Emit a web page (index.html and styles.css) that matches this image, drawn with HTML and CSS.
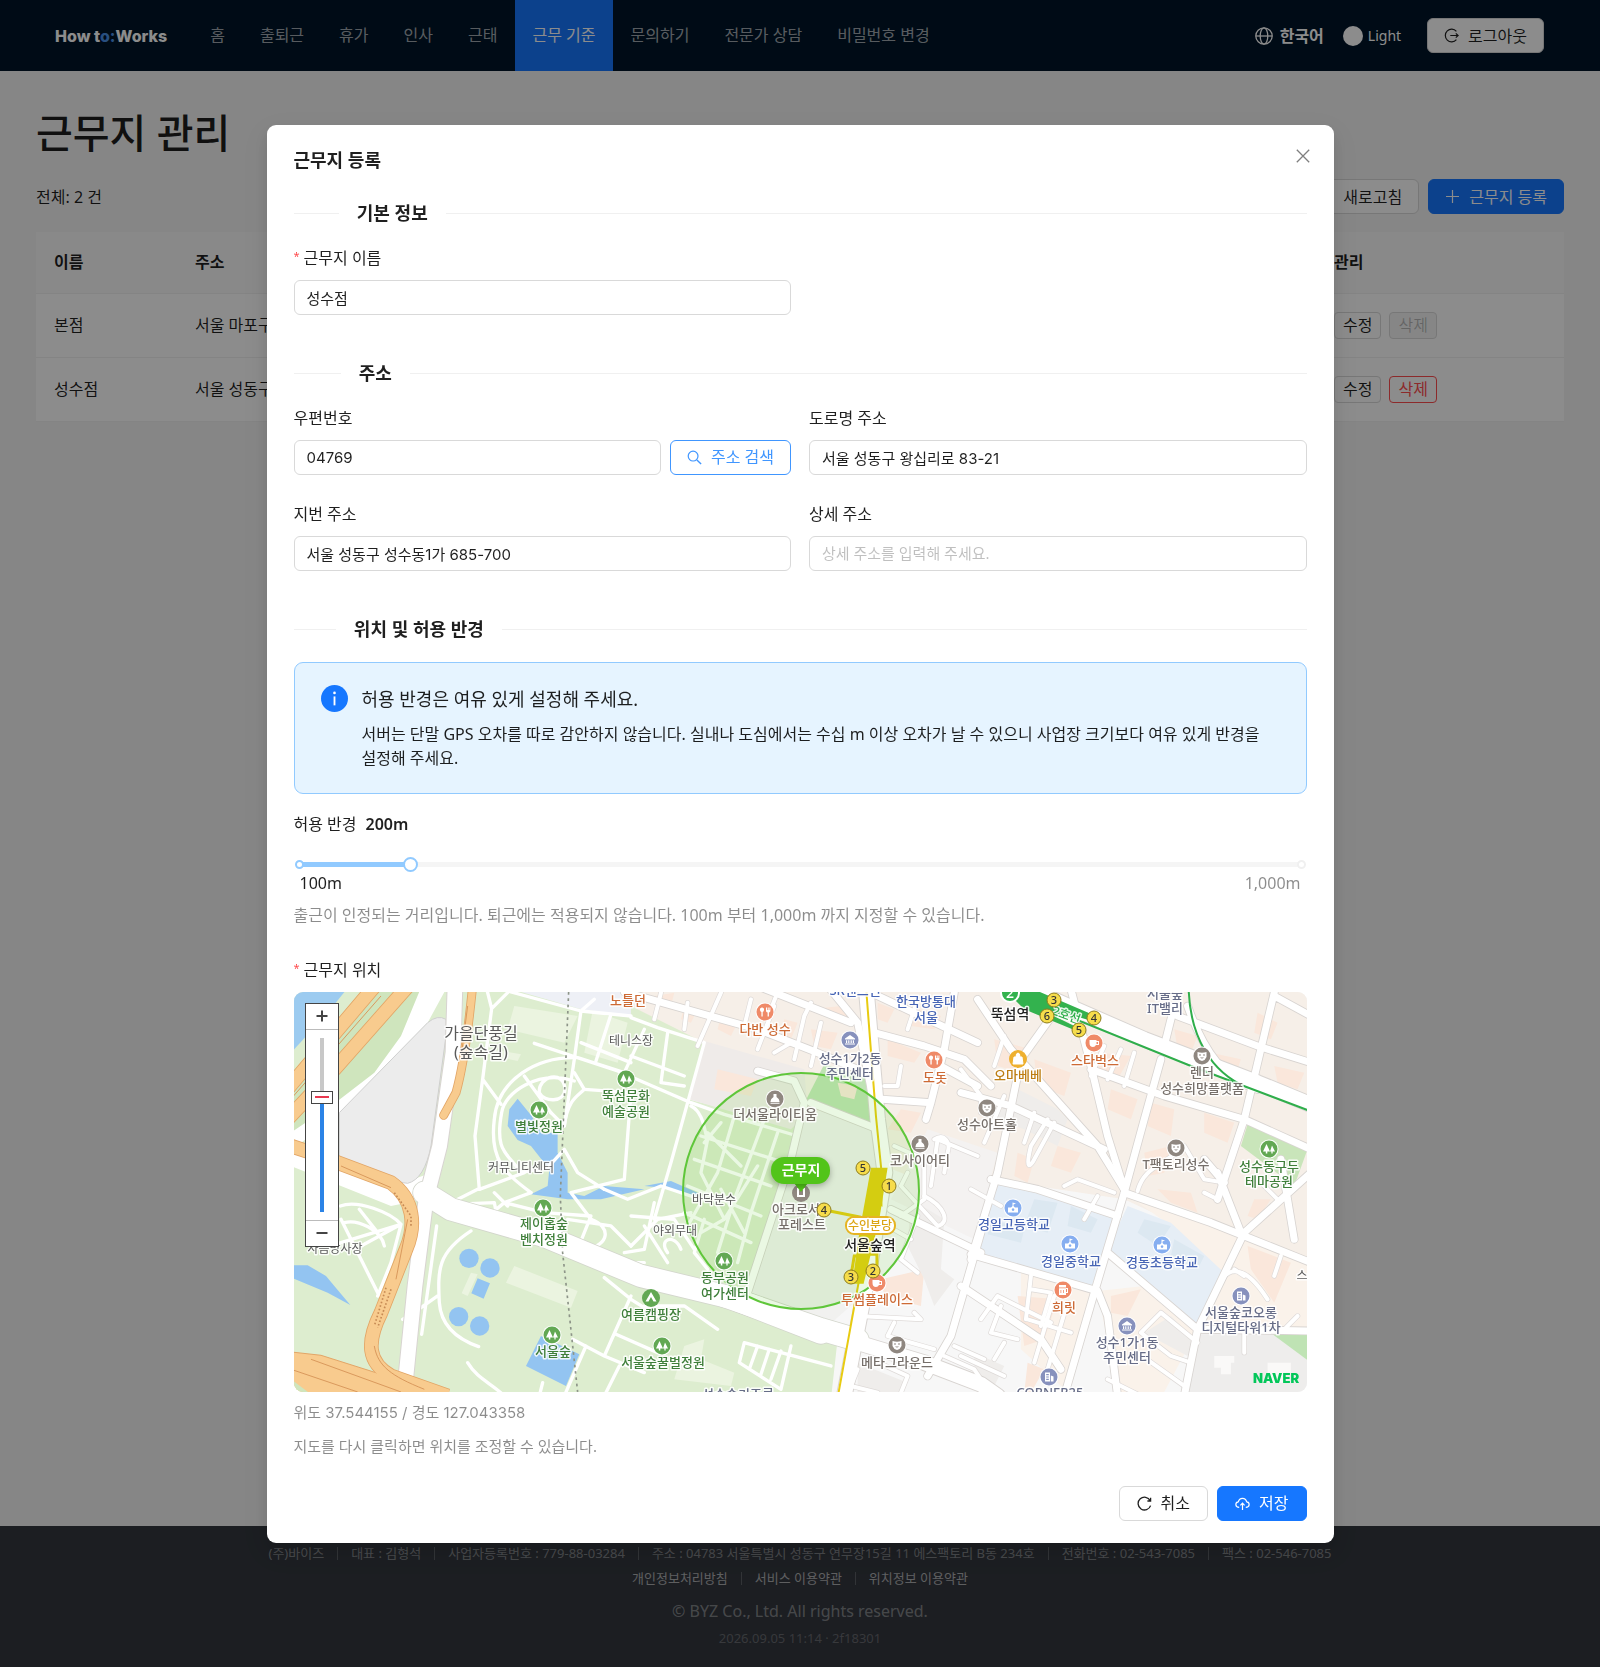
FILE: index.html
```html
<!DOCTYPE html>
<html lang="ko">
<head>
<meta charset="utf-8">
<meta name="viewport" content="width=device-width, initial-scale=1">
<title>근무지 관리</title>
<link rel="stylesheet" href="styles.css">
</head>
<body>
<div class="page">
  <header class="topbar">
    <a class="logo" href="#">How t<span class="logo-accent">o:</span>Works</a>
    <nav class="nav">
      <a href="#">홈</a><a href="#">출퇴근</a><a href="#">휴가</a><a href="#">인사</a><a href="#">근태</a><a class="active" href="#">근무 기준</a><a href="#">문의하기</a><a href="#">전문가 상담</a><a href="#">비밀번호 변경</a>
    </nav>
    <div class="tools">
      <button class="lang" type="button">
        <svg class="globe" viewBox="0 0 18 18" aria-hidden="true"><g fill="none" stroke="currentColor" stroke-width="1.3"><circle cx="9" cy="9" r="8.2"/><ellipse cx="9" cy="9" rx="3.8" ry="8.2"/><path d="M.8 9h16.4"/></g></svg>
        한국어
      </button>
      <button class="theme" type="button"><span class="theme-dot"></span>Light</button>
      <button class="btn" type="button">
        <svg class="ico" viewBox="0 0 15 15" aria-hidden="true"><path d="M12.4 3.4A6.3 6.3 0 1 0 12.4 11.6M6.3 7.5h7.6M11.8 5.4l2.3 2.1-2.3 2.1" fill="none" stroke="currentColor" stroke-width="1.2"/></svg>
        로그아웃
      </button>
    </div>
  </header>

  <main class="content">
    <h1>근무지 관리</h1>
    <div class="listbar">
      <span>전체: 2 건</span>
      <div class="actions">
        <button class="btn" type="button">
          <svg class="ico" viewBox="0 0 15 15" aria-hidden="true"><path d="M13.2 4.6A6.4 6.4 0 1 0 13.6 9.6M13.6 1.8v3.2h-3.2" fill="none" stroke="currentColor" stroke-width="1.3"/></svg>
          새로고침
        </button>
        <button class="btn primary" type="button">
          <svg class="ico" viewBox="0 0 15 15" aria-hidden="true"><path d="M7.5 1v13M1 7.5h13" fill="none" stroke="currentColor" stroke-width="1.2"/></svg>
          근무지 등록
        </button>
      </div>
    </div>
    <table class="sites">
      <thead><tr><th class="col-name">이름</th><th>주소</th><th class="col-act">관리</th></tr></thead>
      <tbody>
        <tr><td>본점</td><td>서울 마포구</td><td><div class="row-actions"><button class="btn small" type="button">수정</button><button class="btn small" type="button" disabled>삭제</button></div></td></tr>
        <tr><td>성수점</td><td>서울 성동구</td><td><div class="row-actions"><button class="btn small" type="button">수정</button><button class="btn small danger" type="button">삭제</button></div></td></tr>
      </tbody>
    </table>
  </main>

  <footer class="footer">
    <ul class="facts"><li>(주)바이즈</li><li>대표 : 김형석</li><li>사업자등록번호 : 779-88-03284</li><li>주소 : 04783 서울특별시 성동구 연무장15길 11 에스팩토리 B동 234호</li><li>전화번호 : 02-543-7085</li><li>팩스 : 02-546-7085</li></ul>
    <ul class="facts links"><li><a href="#">개인정보처리방침</a></li><li><a href="#">서비스 이용약관</a></li><li><a href="#">위치정보 이용약관</a></li></ul>
    <p class="copy">© BYZ Co., Ltd. All rights reserved.</p>
    <p class="build">2026.09.05 11:14 · 2f18301</p>
  </footer>
</div>

<div class="mask">
<form class="modal" role="dialog" aria-labelledby="modal-title">
  <div class="modal-head">
    <h2 id="modal-title">근무지 등록</h2>
    <button class="close" type="button" aria-label="닫기"><svg viewBox="0 0 14 14" aria-hidden="true"><path d="M.8.8l12.4 12.4M13.2.8L.8 13.2" fill="none" stroke="currentColor" stroke-width="1.3"/></svg></button>
  </div>

  <h3 class="divider"><span>기본 정보</span></h3>
  <div class="fields">
    <div class="field"><label class="required" for="f-name">근무지 이름</label><input class="text" id="f-name" type="text" value="성수점"></div>
  </div>

  <h3 class="divider spaced"><span>주소</span></h3>
  <div class="fields">
    <div class="field"><label for="f-zip">우편번호</label>
      <div class="with-button"><input class="text" id="f-zip" type="text" value="04769">
        <button class="btn outline" type="button"><svg class="ico" viewBox="0 0 15 15" aria-hidden="true"><path d="M9.9 9.9l4.2 4.2" fill="none" stroke="currentColor" stroke-width="1.4"/><circle cx="6.1" cy="6.1" r="4.9" fill="none" stroke="currentColor" stroke-width="1.2"/></svg>주소 검색</button></div>
    </div>
    <div class="field"><label for="f-road">도로명 주소</label><input class="text" id="f-road" type="text" value="서울 성동구 왕십리로 83-21"></div>
    <div class="field"><label for="f-lot">지번 주소</label><input class="text" id="f-lot" type="text" value="서울 성동구 성수동1가 685-700"></div>
    <div class="field"><label for="f-detail">상세 주소</label><input class="text" id="f-detail" type="text" placeholder="상세 주소를 입력해 주세요."></div>
  </div>

  <h3 class="divider spaced"><span>위치 및 허용 반경</span></h3>
  <div class="alert">
    <svg class="alert-ico" viewBox="0 0 26 26" aria-hidden="true"><circle cx="13" cy="13" r="13" fill="#1677ff"/><circle cx="13" cy="7.6" r="1.3" fill="#fff"/><path d="M13 11v8.6" stroke="#fff" stroke-width="1.8"/></svg>
    <div>
      <p class="alert-title">허용 반경은 여유 있게 설정해 주세요.</p>
      <p>서버는 단말 GPS 오차를 따로 감안하지 않습니다. 실내나 도심에서는 수십 m 이상 오차가 날 수 있으니 사업장 크기보다 여유 있게 반경을 설정해 주세요.</p>
    </div>
  </div>

  <label class="radius-label" for="f-radius">허용 반경 <b>200m</b></label>
  <div class="slider">
    <span class="dot on"></span><span class="dot end"></span>
    <input id="f-radius" type="range" min="100" max="1000" value="200">
  </div>
  <div class="marks"><span>100m</span><span class="muted">1,000m</span></div>
  <p class="help">출근이 인정되는 거리입니다. 퇴근에는 적용되지 않습니다. 100m 부터 1,000m 까지 지정할 수 있습니다.</p>

  <p class="map-label required">근무지 위치</p>
  <div class="map">
    <svg class="map-art" viewBox="0 0 1013 400" preserveAspectRatio="xMidYMid slice" role="img" aria-label="근무지 지도">
      <defs>
        <g id="road-l" fill="none" stroke-linecap="round" stroke-linejoin="round">
          <path d="M400 620L480 670L760 750L1050 870L1320 935L1590 1040"/>
          <path d="M1300 930L1590 1030L1700 1062"/>
        </g>
        <g id="road-m" fill="none" stroke-linecap="round" stroke-linejoin="round">
          <path d="M492 0L486 200L446 480L405 640L372 900L345 1170"/>
          <path d="M2240 20L2560 160L2900 290L3070 360"/>
          <path d="M1600 1035L1700 1070L1900 1130L2070 1195L2120 1230"/>
          <path d="M1725 0L1760 400L1782 560L1740 820L1660 1230"/>
        </g>
        <g id="road-s" fill="none" stroke-linecap="round" stroke-linejoin="round">
          <path d="M2060 40L2160 190L2420 480L2500 610M2010 320L2160 360L2440 490M2290 80L2190 220L2120 560L2040 820"/>
          <path d="M2340 10L2400 240L2450 450L2500 610M2400 250L2620 330L2860 400L3060 490M2610 220L2560 400L2500 620L2410 920L2320 1230"/>
          <path d="M2660 90L2900 180L3060 230M2650 60L2620 180M2950 20L2860 400L2780 640M2950 30L3060 90M2690 60C2740 200 2800 280 2900 310"/>
          <path d="M2100 580L2240 610L2480 690M2500 620L2760 710L3060 830M2860 740L2720 1030L2680 1230M2450 800L2720 1030M2040 805L2420 915L2450 990L2480 1230"/>
          <path d="M2720 1030L3060 1035M2860 740L2960 650L3060 560M2780 560L2850 740M2970 520L3010 760M2800 590L2740 520"/>
          <path d="M1800 670L2070 800M2070 740L1980 1050L1910 1170M2010 900L2250 1060L2310 1150"/>
          <path d="M1540 350L1500 520L1360 950M1540 350L1510 285L1400 255M1560 350L1750 425"/>
          <path d="M1000 18L1400 130L1580 200L1700 250M1400 0L1680 110M1610 0L1700 110L1755 380M1750 140L1900 180L2020 220L2100 300M1740 20L2060 170"/>
          <path d="M1775 340L1920 350L1905 400M1990 20L1960 190L1920 350M1930 230L2060 300"/>
        </g>
        <g id="road-xs" fill="none" stroke-linecap="round" stroke-linejoin="round">
          <path d="M1110 20L1090 100M1190 50L1180 130M1290 20L1220 180M1380 40L1360 120M1450 60L1400 190M1500 170L1450 200M1540 90L1510 220M1590 110L1560 240M1460 18L1440 70M1560 50L1540 90"/>
          <path d="M1780 300H1820L1830 240M1880 40L1850 130M1920 600L1940 460L2060 510M1930 460C1960 440 1980 470 1970 500L1960 560M2140 330L2080 470M1810 480L1900 520L1900 640L1830 690M2010 250L2070 330V380M2290 410L2230 520C2220 540 2200 560 2220 480L2270 400M2230 380L2200 470M2440 180L2400 270M2490 190L2450 280M2530 200L2500 300M2140 150L2110 240"/>
          <path d="M2540 615C2560 540 2620 540 2680 480L2740 580L2800 590M2320 600L2360 580L2470 620M2130 660L2040 610M2380 700L2420 630M2900 580L2960 640M2740 620L2780 640"/>
          <path d="M2070 1000L2120 930L2280 1010M2130 960L2100 1040L2180 1060M2220 870L2205 1000M2290 930L2230 1130M2330 950L2270 1150M2210 1000L2340 1040M2220 910L2280 920L2250 1020M2550 1040L2610 980L2720 1070M2550 1040L2640 1110L2700 1130M2860 1030V1100M2980 1030L3020 990M2970 810L2950 870M2830 850L2860 870M2540 1100L2680 1200M2450 1180L2550 1230M2770 930C2800 830 2860 830 2930 940"/>
          <path d="M1700 990L1890 1000L1870 980M1810 1010L1790 1050L1930 1090M1990 1080L2080 1120M1960 1110L2050 1150L2090 1210M1700 1150L1680 1200L1760 1220M1740 1120L1850 1170L1830 1220M2140 1070L2110 1120M2010 1110L2140 1170"/>
          <path d="M1850 560L1830 600L1940 720C1980 710 1960 660 1900 630M1880 690L1830 820L1880 860M1790 720L1860 760"/>
        </g>
        <g id="park-path" fill="none" stroke-linecap="round" stroke-linejoin="round">
          <path d="M585 0L602 68L575 280L552 450L565 610M602 68L650 20M575 280L630 355M690 560L770 545L820 490L860 560L940 610M660 18L870 75L1020 90M910 40L870 75L850 220L820 420L780 380"/>
          <path d="M1000 260L860 215C740 210 620 280 610 400C595 520 640 560 720 620M850 285C740 250 640 320 632 380C610 500 650 500 690 560M730 172L980 255L1200 350L1300 385L1520 450M745 320C740 270 820 250 822 310C820 350 760 350 745 320M780 380L700 270M850 260L880 310C860 330 830 340 820 420"/>
          <path d="M870 170L1020 230M960 85L915 225M1020 95L1100 125L1240 170L1140 530L1090 700M1060 130L1000 260M1130 140L1110 290L1180 300M1020 210L1180 270M560 610L480 650M565 610L700 560M880 310L1020 320L1000 580M1000 580L840 620L900 700M940 610L1010 640L1110 600L1230 640"/>
          <path d="M720 620L640 650L580 700M640 650L760 680L900 690L860 790M610 620L650 660M480 655L610 650L620 700M900 700C960 720 960 780 880 790M830 700L960 720L1020 780M860 800L980 830L1060 830"/>
          <path d="M540 735C440 800 440 850 445 950C450 1020 500 1060 563 1082M437 720L392 1045M440 930L390 965L335 1000M148 660C200 640 300 680 330 715L210 780M150 700L265 930M160 710C200 700 270 730 280 780M330 715L300 830L260 930M150 770L330 715M205 670L260 740"/>
          <path d="M530 1130C560 1180 600 1190 640 1230M755 1190L745 1230M940 875L1020 940L1100 990M1020 930L940 1110L845 1060M975 1045L1100 1100M940 1110L1060 1160M985 1140L940 1230M885 1080L820 1230M1060 960L1180 960L1280 1030"/>
          <path d="M1360 1070L1620 1140M1360 1070L1345 1130L1470 1210L1500 1080M1400 1080L1375 1150M1435 1090L1410 1165M1470 1095L1440 1180"/>
          <path d="M1200 360C1240 380 1240 440 1250 460L1230 560L1300 700M1230 450L1480 530M1210 520L1440 600M1190 600L1410 690M1180 680L1380 770M1330 390L1280 560L1190 720M1420 400L1330 640L1280 800M1460 440L1380 680L1340 830M1250 440L1350 540M1400 540L1300 700L1230 740M1290 610L1360 740M1240 470L1290 410"/>
          <path d="M1020 780L1100 700L1200 680M1060 720L1130 830M1020 690L1150 700L1210 790M1090 650L1060 790L1000 800M1130 800C1100 760 1150 740 1170 790M1240 700L1210 800L1250 850"/>
        </g>
        <g id="blobs">
          <path d="M1090 30L1150 20L1140 60L1100 60ZM1180 60L1220 70L1200 110L1170 100ZM1290 90L1340 110L1320 150L1280 130ZM1480 100L1520 110L1500 160L1470 150ZM1560 130L1640 140L1620 190L1570 180ZM1560 70L1650 60L1680 95L1600 90ZM1280 250L1400 280L1380 330L1270 310ZM1640 290L1700 300L1690 340L1650 330ZM1850 60L1950 90L1930 130L1860 120ZM1760 50L1810 70L1790 110L1760 100ZM1790 160L1890 200L1870 230L1790 210ZM1830 370L1890 380L1860 440L1790 430ZM1770 880L1900 850L1890 960L1780 930Z"/>
          <path d="M2110 160L2220 190L2190 260L2120 240ZM2230 220L2340 260L2320 330L2240 300ZM2460 310L2540 340L2520 400L2450 370ZM2430 200L2520 210L2480 280L2420 270ZM2580 350L2650 370L2640 450L2570 420ZM2650 130L2720 150L2700 200L2660 190ZM2760 200L2850 220L2830 280L2780 260ZM2900 80L2960 110L2940 160L2890 140ZM2950 240L3040 260L3020 310L2960 290ZM2300 480L2370 500L2340 560L2280 540ZM2180 500L2230 520L2210 590L2170 570ZM2560 500L2640 480L2620 560L2570 570ZM2740 380L2830 410L2810 470L2740 440ZM2600 610L2700 620L2720 680L2640 650ZM2890 640L2940 640L2900 700L2870 690ZM2870 780L3000 830L2950 950L2880 850ZM2180 930L2300 940L2260 1060L2200 1080ZM2460 930L2550 910L2510 990L2460 980ZM2210 1130L2260 1150L2220 1220L2200 1220Z"/>
        </g>
        <g id="g-tree"><circle r="9.5" fill="#fff"/><circle r="8.5" fill="#62a853"/><path d="M-2.5-5L-6 2.5h2.8V4.5h1.5V2.5H1ZM3-3.5L1 2.5h1.4v2h1.2v-2H6Z" fill="#fff"/></g>
        <g id="g-food"><circle r="9.5" fill="#fff"/><circle r="8.5" fill="#ef8a68"/><path d="M-3-4.5a2 2 0 0 1 2 2.5Q-1-.5-2.3 0V4.5h-1.3V0Q-5-.5-5-2A2 2 0 0 1-3-4.5ZM1-4.5h1V-2h.7v-2.5h1V-2h.7v-2.5h1V-1Q5.4 0 3.9.5v4h-1.3v-4Q1 0 1-1Z" fill="#fff"/></g>
        <g id="g-cup"><circle r="9.5" fill="#fff"/><circle r="8.5" fill="#ef8a68"/><path d="M-4.5-3H2.5V-2H5V2H2Q1 4-1 4Q-4.5 4-4.5 0ZM2.5-1V1H4V-1Z" fill="#fff" fill-rule="evenodd"/></g>
        <g id="g-beer"><circle r="9.5" fill="#fff"/><circle r="8.5" fill="#ef8a68"/><path d="M-4-5H3V-2H5V3H3V5H-4ZM-4-2.5V-1.8H3V-2.5ZM3-1V2H4V-1ZM-2.5 0V3H-1.7V0ZM0 0V3H.8V0Z" fill="#fff" fill-rule="evenodd"/></g>
        <g id="g-bank"><circle r="9.5" fill="#fff"/><circle r="8.5" fill="#8791bd"/><path d="M0-5L5-1.5V-.5H-5V-1.5ZM-4 .2H-2.8V3H-4ZM-1.8 .2H-.6V3H-1.8ZM.6 .2H1.8V3H.6ZM2.8 .2H4V3H2.8ZM-5 3.5H5V4.5H-5Z" fill="#fff"/></g>
        <g id="g-office"><circle r="9.5" fill="#fff"/><circle r="8.5" fill="#8791bd"/><path d="M-4-4.5H1V4.5H-4ZM1.8-1.5L4.5-.5V4.5H1.8ZM-2.8-3V-1.8H-.2V-3ZM-2.8-.6V.6H-.2V-.6ZM-2.8 1.8V3H-.2V1.8Z" fill="#fff" fill-rule="evenodd"/></g>
        <g id="g-mask"><circle r="9.5" fill="#fff"/><circle r="8.5" fill="#8f8780"/><path d="M-4.5-4Q0-2.5 4.5-4V1Q3.5 4 0 5Q-3.5 4-4.5 1ZM-3-1.5V-.6H-1V-1.5ZM1-1.5V-.6H3V-1.5ZM-2 1.5Q0 3.5 2 1.5Z" fill="#fff" fill-rule="evenodd"/></g>
        <g id="g-vase"><circle r="9.5" fill="#fff"/><circle r="8.5" fill="#8f8780"/><path d="M-1.5-5H1.5V-2Q4.5 0 4.5 2.2V3.2H-4.5V2.2Q-4.5 0-1.5-2ZM-4.5 3.9H4.5V4.8H-4.5Z" fill="#fff"/></g>
        <g id="g-school"><circle r="9.5" fill="#fff"/><circle r="8.5" fill="#86aef0"/><path d="M-.5-5.5L3-4.5L.5-3.5V-2L2-.5H5V4.5H-5V-.5H-2L-.5-2ZM0 .3A1.3 1.3 0 1 0 .1.3Z" fill="#fff" fill-rule="evenodd"/></g>
      </defs>

      <g transform="translate(-3 -6) scale(.3333)">
        <rect x="0" y="0" width="3070" height="1240" fill="#f7f7f7"/>
        <path d="M1000 0H3070V1050L2800 780L2500 640L2100 580L1980 620L1780 540L1240 170L1000 100Z" fill="#f6efe8"/>
        <path d="M2500 620L3060 830V1030H2720L2780 880L2640 720ZM2420 915L2560 900L2720 1030L2620 1218H2480ZM2190 860L2410 915L2330 1218L2190 1090Z" fill="#faf2ea"/>
        <path d="M0 0H900L1240 170L1190 340L1560 430L1500 560L1360 960L1640 1060L1620 1240H0Z" fill="#ddedcf"/>
        <path d="M880 0H1020V90L870 70L680 15Z" fill="#eef0f6"/>
        <path d="M1240 165L1540 250L1550 380L1500 430L1195 340Z" fill="#efebe9"/>
        <path d="M1540 360L1760 430V600L1690 950L1600 1030L1360 950L1500 540Z" fill="#f1f1ef"/>
        <path d="M1600 235L1760 285L1750 415L1540 352Z" fill="#bfe3b4"/>
        <path d="M1910 430L2120 500L2050 760L1800 640Z" fill="#f4f2f1"/>
        <path d="M2110 580L2480 690L2400 905L2050 800ZM2510 660L2640 710L2810 870L2720 1020L2450 790Z" fill="#e6eef6"/>
        <path d="M2230 640L2300 650L2270 740L2200 720ZM2340 660L2420 700L2400 740L2330 720ZM2100 700L2200 730L2190 770L2090 745ZM2560 700L2640 720L2600 780L2540 740ZM2650 760L2740 810L2720 850L2640 810Z" fill="#dce8f1"/>
        <path d="M2730 1045H3060V1240H2680Z" fill="#eeedec"/>
        <path d="M2770 1110H2830V1130H2820V1165H2790V1145H2770ZM2930 1130H3000V1160H2980V1190H2930Z" fill="#faf9f8"/>
        <path d="M2945 1045H3060V1130Z" fill="#bfe3b4"/>
        <path d="M2870 415L3050 490L3010 600L2850 480Z" fill="#c9e5ba"/>
        <use href="#blobs" fill="#fae7db"/>
        <path d="M2180 310L2300 370L2330 400L2300 480L2200 430L2110 400ZM2640 990L2710 1060L2690 1110L2560 1040ZM1700 1130L1850 1190L1830 1220H1700ZM2050 1100L2140 1140L2110 1200L2050 1170ZM1860 640L1960 700L1950 850L1990 880L1930 960L1900 880L1850 780Z" fill="#efedeb"/>
        <path d="M670 60L860 90L820 170L650 130ZM610 190L690 205L680 225L610 210ZM670 840L860 915L840 965L645 890ZM540 860L560 865L530 930L512 922ZM1180 1080L1240 1060L1230 1120L1330 1160L1320 1200L1150 1180ZM905 75L1010 110L980 230L880 200Z" fill="#ebf4e0"/>
        <path d="M0 0H175L110 80L0 200Z" fill="#9ccbf0"/>
        <path d="M145 370L0 450V290L270 0H420L330 160L230 290Z" fill="#cfe5bd"/>
        <path d="M392 0H470L410 110L150 380L30 470L0 460V440L140 345L250 260L330 150Z" fill="#fff"/>
        <path d="M0 500L150 510L340 590L420 560L400 640L300 660L150 600L0 540Z" fill="#fff"/>
        <path d="M145 380L410 110Q440 85 465 100V150L420 480Q400 580 350 592Q310 590 145 512Z" fill="#ececec" stroke="#cfcfcf" stroke-width="3"/>

        <g fill="#93c4f1">
          <path d="M680 338L722 390L750 440L800 440V500L830 560V620L880 630L940 600L1060 610L930 640L830 640L720 625L770 600L775 550L720 480L680 462L650 420L655 370Z"/>
          <path d="M1060 600L1140 585L1220 620V640L1120 605Z"/>
          <circle cx="534" cy="817" r="29"/><circle cx="597" cy="846" r="29"/><circle cx="503" cy="992" r="29"/><circle cx="566" cy="1020" r="29"/>
          <path d="M560 877L597 892L578 938L541 922ZM0 838L50 838L105 870L130 900L178 957L110 920L0 875ZM750 1050L865 1105L825 1200L705 1140Z"/>
        </g>

        <use href="#park-path" stroke="#fff" stroke-width="10"/>
        <use href="#road-xs" stroke="#dedad8" stroke-width="16"/>
        <use href="#road-s" stroke="#d8d4d1" stroke-width="26"/>
        <use href="#road-m" stroke="#d8d4d1" stroke-width="50"/>
        <use href="#road-l" stroke="#d3d6cc" stroke-width="72"/>
        <use href="#road-xs" stroke="#fff" stroke-width="12"/>
        <use href="#road-s" stroke="#fff" stroke-width="21"/>
        <use href="#road-m" stroke="#fff" stroke-width="44"/>
        <use href="#road-l" stroke="#fff" stroke-width="67"/>

        <g fill="none" stroke="#e2a566" stroke-linejoin="round">
          <path d="M-20 320L260 -10M-20 410L130 250L360 -10" stroke-width="44"/>
          <path d="M545 0C530 150 515 250 495 320L458 388" stroke-width="27" stroke-linecap="round"/>
          <path d="M0 480L60 500L300 590C370 640 375 720 345 790L270 980C225 1070 230 1130 300 1170L470 1230" stroke-width="44"/>
        </g>
        <path d="M0 1098L90 1108L270 1165L470 1232H0Z" fill="#f8cb8e" stroke="#e2a566" stroke-width="3"/>
        <g fill="none" stroke="#f8cb8e" stroke-linejoin="round">
          <path d="M-20 320L260 -10M-20 410L130 250L360 -10" stroke-width="39"/>
          <path d="M545 0C530 150 515 250 495 320L458 388" stroke-width="22" stroke-linecap="round"/>
          <path d="M0 480L60 500L300 590C370 640 375 720 345 790L270 980C225 1070 230 1130 300 1170L470 1230" stroke-width="39"/>
        </g>
        <path d="M-10 350L270 30M0 1150L200 1218M60 1120L330 1218M250 1080C260 1140 300 1170 400 1210M350 700L315 880M530 60L512 200M150 540L300 605" fill="none" stroke="#d9995c" stroke-width="3"/>
        <path d="M300 910L260 1025M285 905L250 1020M310 620L360 690V720" fill="none" stroke="#c68a54" stroke-width="5" stroke-dasharray="5 6"/>
        <path d="M0 1180L80 1240H0Z" fill="#cfe5bd"/>
        <path d="M833 18L808 630L815 800L860 1218" fill="none" stroke="#8d9488" stroke-width="5" stroke-dasharray="8 11"/>

        <path d="M1725 0L1755 390L1772 560M1703 890L1642 1225" fill="none" stroke="#e8cb10" stroke-width="6"/>
        <path d="M1620 676L1710 694M1700 810H1690L1680 870M1730 805H1758V850M1770 600V655L1740 640" fill="none" stroke="#e8cb10" stroke-width="9"/>
        <path d="M1740 545H1790L1765 700L1718 893H1684L1705 740Z" fill="#e6cf10"/>

        <path d="M2290 74L2700 240L3060 376M2693 0C2695 150 2760 260 2870 305" fill="none" stroke="#2fae4b" stroke-width="6"/>
        <path d="M2130 0H2205L2420 92L2412 108L2320 80L2300 95L2370 130L2350 132L2200 70Z" fill="#33b24e"/>
      </g>

      <circle cx="507" cy="199" r="118" fill="#52c41a" fill-opacity=".12" stroke="#5fc63a" stroke-width="2"/>

      <use href="#g-tree" x="332" y="87"/><use href="#g-tree" x="245" y="118"/><use href="#g-tree" x="249" y="216"/><use href="#g-tree" x="258" y="343"/><use href="#g-tree" x="430" y="269"/><use href="#g-tree" x="368" y="354"/><use href="#g-tree" x="975" y="157"/>
      <circle cx="357" cy="306" r="9" fill="#62a853"/><path d="M357 300l-5.5 9.5h11zM357 305l2.5 4.5h-5z" fill="#fff" fill-rule="evenodd"/>
      <use href="#g-food" x="471" y="20"/><use href="#g-food" x="640" y="68"/>
      <use href="#g-cup" x="800" y="51"/><use href="#g-cup" x="583" y="291"/><use href="#g-beer" x="769" y="298"/>
      <use href="#g-bank" x="556" y="48"/><use href="#g-bank" x="833" y="334"/>
      <use href="#g-office" x="947" y="304"/><use href="#g-office" x="755" y="385"/>
      <use href="#g-mask" x="693" y="116"/><use href="#g-mask" x="908" y="64"/><use href="#g-mask" x="882" y="156"/><use href="#g-mask" x="603" y="353"/>
      <use href="#g-vase" x="481" y="107"/><use href="#g-vase" x="626" y="152"/>
      <circle cx="507" cy="201" r="9" fill="#8f8780"/><path d="M503 196h8v9h-8z" fill="#fff"/><path d="M505 198h4v5h-4z" fill="#8f8780"/>
      <use href="#g-school" x="719" y="216"/><use href="#g-school" x="776" y="252"/><use href="#g-school" x="868" y="253"/>
      <circle cx="724" cy="67" r="9" fill="#eeb02f"/><path d="M720 65h8l1 7h-10zM722 65q0-4 2-4t2 4" fill="#fff" stroke="#fff"/>

      <g class="lbl l-gray l-big"><text x="187" y="47">가을단풍길</text><text x="187" y="66">(숲속길)</text></g>
      <g class="lbl l-gray l-small"><text x="227" y="180">커뮤니티센터</text><text x="337" y="53">테니스장</text><text x="41" y="261">사슴망사장</text><text x="420" y="212">바닥분수</text><text x="381" y="243">야외무대</text><text x="1008" y="288">스</text></g>
      <g class="lbl l-green"><text x="245" y="139">별빛정원</text><text x="332" y="108">뚝섬문화</text><text x="332" y="124">예술공원</text><text x="250" y="236">제이홉숲</text><text x="250" y="252">벤치정원</text><text x="259" y="364">서울숲</text><text x="431" y="290">동부공원</text><text x="431" y="306">여가센터</text><text x="357" y="327">여름캠핑장</text><text x="369" y="375">서울숲꿀벌정원</text><text x="975" y="179">성수동구두</text><text x="975" y="194">테마공원</text></g>
      <g class="lbl l-orange"><text x="334" y="13">노틀던</text><text x="471" y="42">다반 성수</text><text x="641" y="90">도돗</text><text x="801" y="73">스타벅스</text><text x="583" y="312">투썸플레이스</text><text x="770" y="320">희릿</text></g>
      <g class="lbl l-amber"><text x="724" y="88">오마베베</text></g>
      <g class="lbl l-blue"><text x="561" y="3">SR랜드런</text><text x="632" y="14">한국방통대</text><text x="632" y="30">서울</text><text x="720" y="237">경일고등학교</text><text x="777" y="274">경일중학교</text><text x="868" y="275">경동초등학교</text></g>
      <g class="lbl l-slate"><text x="556" y="71">성수1가2동</text><text x="556" y="86">주민센터</text><text x="871" y="6">서울숲</text><text x="871" y="21">IT밸리</text><text x="833" y="355">성수1가1동</text><text x="833" y="370">주민센터</text><text x="947" y="325">서울숲코오롱</text><text x="947" y="340">디지털타워1차</text><text x="756" y="405">CORNER25</text><text x="444" y="407">성수숲키즈룸</text></g>
      <g class="lbl l-brown"><text x="481" y="127">더서울라이티움</text><text x="626" y="173">코사이어티</text><text x="502" y="222">아크로서</text><text x="508" y="237">포레스트</text><text x="693" y="137">성수아트홀</text><text x="908" y="85">렌더</text><text x="908" y="101">성수희망플랫폼</text><text x="882" y="177">T팩토리성수</text><text x="603" y="375">메타그라운드</text></g>

      <circle cx="716" cy="1" r="9" fill="#33b24e" stroke="#fff" stroke-width="2"/>
      <g class="lbl l-line"><text x="771" y="27" transform="rotate(20 771 27)">2호선</text></g>
      <rect x="552" y="225" width="49" height="17" rx="8" fill="#fff" stroke="#e6b422" stroke-width="2"/>
      <g class="lbl l-pill"><text x="576" y="238">수인분당</text></g>
      <g class="lbl l-station"><text x="716" y="27">뚝섬역</text><text x="576" y="258">서울숲역</text></g>
      <g fill="#f6dc4b" stroke="#8d7c1c"><circle cx="569" cy="176" r="7"/><circle cx="595" cy="194" r="7"/><circle cx="530" cy="218" r="7"/><circle cx="557" cy="285" r="7"/><circle cx="579" cy="279" r="7"/><circle cx="760" cy="8" r="7"/><circle cx="800" cy="26" r="7"/><circle cx="753" cy="24" r="7"/><circle cx="785" cy="38" r="7"/></g>
      <g class="exit"><text x="569" y="180">5</text><text x="595" y="198">1</text><text x="530" y="222">4</text><text x="557" y="289">3</text><text x="579" y="283">2</text><text x="760" y="12">3</text><text x="800" y="30">4</text><text x="753" y="28">6</text><text x="785" y="42">5</text></g>
      <g class="exit line-no"><text x="716" y="6">2</text></g>
      <path d="M500 191h14l-7 9z" fill="#52c41a"/>
      <rect x="477" y="165" width="59" height="27" rx="13" fill="#52c41a" class="bubble"/>
      <g class="bubble-text"><text x="507" y="183">근무지</text></g>
      <g class="naver"><text x="982" y="391">NAVER</text></g>
    </svg>
    <div class="zoom">
      <button type="button" aria-label="확대"><svg viewBox="0 0 12 12" aria-hidden="true"><path d="M6 .5v11M.5 6h11" stroke="#444" stroke-width="2"/></svg></button>
      <div class="zoom-track"><input type="range" min="0" max="100" value="67" aria-label="지도 확대 수준"></div>
      <button type="button" aria-label="축소"><svg viewBox="0 0 12 12" aria-hidden="true"><path d="M.5 6h11" stroke="#444" stroke-width="2"/></svg></button>
    </div>
  </div>
  <p class="help coords">위도 37.544155 / 경도 127.043358</p>
  <p class="help hint">지도를 다시 클릭하면 위치를 조정할 수 있습니다.</p>

  <div class="modal-foot">
    <button class="btn" type="button"><svg class="ico" viewBox="0 0 15 15" aria-hidden="true"><path d="M13.2 4.6A6.4 6.4 0 1 0 13.6 9.6M13.6 1.8v3.2h-3.2" fill="none" stroke="currentColor" stroke-width="1.3"/></svg>취소</button>
    <button class="btn primary" type="submit"><svg class="ico" viewBox="0 0 15 15" aria-hidden="true"><path d="M4.2 11.3C-.2 11.3 0 6.2 3.3 5.8C4.5 1.3 10.5 1.3 11.7 5.8C15 6.2 15.2 11.3 10.8 11.3M7.5 14V7.5M5.4 9.3l2.1-2.1 2.1 2.1" fill="none" stroke="currentColor" stroke-width="1.2"/></svg>저장</button>
  </div>
</form>
</div>
</body>
</html>
```
FILE: styles.css
```css
* { box-sizing: border-box; }
body {
  margin: 0;
  background: #f5f5f5;
  color: rgba(0, 0, 0, .88);
  font: 16px/24px "Noto Sans", "Noto Sans CJK KR", sans-serif;
  word-break: keep-all;
}
h1, h2, h3, p, ul { margin: 0; padding: 0; }
a { color: inherit; text-decoration: none; }
button, input { font: inherit; color: inherit; margin: 0; }
button { cursor: pointer; }
.page { min-height: 100vh; display: flex; flex-direction: column; }

/* top bar */
.topbar {
  display: flex;
  align-items: center;
  height: 71px;
  padding: 0 56px 0 55px;
  background: #001529;
  color: #fff;
  white-space: nowrap;
}
.logo { font: 800 16px/24px Inter, sans-serif; margin-right: 26px; }
.logo-accent { color: #4a90e8; }
.nav { display: flex; gap: 1px; align-self: stretch; flex: 1; }
.nav a { padding: 0 17px; line-height: 71px; color: rgba(255, 255, 255, .65); }
.nav a.active { background: #1677ff; color: #fff; }
.tools { display: flex; align-items: center; }
.lang, .theme { display: flex; align-items: center; border: 0; padding: 0; background: none; }
.lang { gap: 7px; font-weight: 600; margin-right: 19px; }
.globe { width: 18px; height: 18px; }
.theme { gap: 5px; font-size: 14px; margin-right: 26px; }
.theme-dot { width: 20px; height: 20px; border-radius: 50%; background: #fff; }

/* buttons */
.btn {
  display: inline-flex;
  align-items: center;
  justify-content: center;
  gap: 9px;
  height: 35px;
  padding: 0 16px;
  border: 1px solid #d9d9d9;
  border-radius: 6px;
  background: #fff;
  color: rgba(0, 0, 0, .88);
  white-space: nowrap;
}
.btn.primary { border-color: #1677ff; background: #1677ff; color: #fff; }
.btn.outline { border-color: #4096ff; color: #4096ff; }
.btn.small { height: 27px; padding: 0 8px; border-radius: 4px; }
.btn.danger { border-color: #ff4d4f; color: #ff4d4f; }
.btn:disabled { background: #f5f5f5; color: rgba(0, 0, 0, .25); }
.ico { width: 15px; height: 15px; flex: none; }

/* list page */
.content { flex: 1; padding: 34px 36px; }
h1 { font-size: 40px; line-height: 56px; font-weight: 500; }
.listbar { display: flex; align-items: center; justify-content: space-between; margin: 18px 0; }
.actions { display: flex; gap: 9px; }
.row-actions { display: flex; gap: 8px; }
.sites { width: 100%; table-layout: fixed; border-collapse: collapse; background: #fff; text-align: left; }
.sites th { height: 61px; padding: 0 18px; background: #fafafa; font-weight: 600; }
.sites td { height: 64px; padding: 0 18px; }
.sites tr { border-bottom: 1px solid #f0f0f0; }
.col-name { width: 141px; }
.col-act { width: 248px; }

/* footer */
.footer {
  padding: 15px 0;
  min-height: 141px;
  background: #33373e;
  color: rgba(255, 255, 255, .4);
  text-align: center;
}
.facts { display: flex; justify-content: center; list-style: none; font-size: 13px; line-height: 25px; }
.facts li { display: flex; align-items: center; white-space: nowrap; }
.facts li + li::before { content: ""; width: 1px; height: 13px; margin: 0 13px; background: rgba(255, 255, 255, .2); }
.links { color: rgba(255, 255, 255, .6); }
.copy { margin-top: 8px; }
.build { margin-top: 3px; font-size: 13px; color: rgba(255, 255, 255, .25); }

/* dialog */
.mask { position: fixed; inset: 0; display: flex; overflow: auto; background: rgba(0, 0, 0, .45); }
.modal {
  width: 100%;
  max-width: 1067px;
  margin: auto;
  padding: 22px 27px;
  border-radius: 9px;
  background: #fff;
  box-shadow: 0 6px 16px rgba(0, 0, 0, .1), 0 9px 28px 8px rgba(0, 0, 0, .05);
}
.modal-head { display: flex; justify-content: space-between; }
h2, h3 { font-size: 18px; line-height: 27px; font-weight: 600; }
.close { width: 24px; height: 18px; margin-right: -8px; padding: 0; border: 0; background: none; color: rgba(0, 0, 0, .5); }
.close svg { width: 14px; height: 14px; display: block; margin: 2px auto; }
.divider { display: flex; align-items: center; margin: 26px 0 19px; white-space: nowrap; }
.divider.spaced { margin-top: 45px; }
.divider::before, .divider::after { content: ""; border-top: 1px solid #f0f0f0; width: 5%; }
.divider::after { width: 95%; }
.divider span { flex: none; padding: 0 18px; }
.fields { display: grid; grid-template-columns: repeat(2, minmax(0, 1fr)); gap: 27px 18px; }
.field { display: flex; flex-direction: column; gap: 10px; }
.required::before { content: "*"; margin-right: 4px; color: #ff4d4f; font-size: 11px; line-height: 11px; vertical-align: 4px; }
.with-button { display: flex; gap: 9px; }
.text {
  width: 100%;
  min-width: 0;
  height: 35px;
  padding: 0 12px;
  border: 1px solid #d9d9d9;
  border-radius: 6px;
  background: #fff;
  font: 15px/24px Inter, "Noto Sans CJK KR", sans-serif;
}
.text::placeholder { color: rgba(0, 0, 0, .25); font-family: "Noto Sans", "Noto Sans CJK KR", sans-serif; }
.alert {
  display: flex;
  gap: 14px;
  padding: 22px 26px 23px;
  border: 1px solid #91caff;
  border-radius: 9px;
  background: #e6f4ff;
}
.alert-ico { flex: none; width: 27px; height: 27px; }
.alert-title { font-size: 18px; line-height: 28px; margin-bottom: 9px; }
.radius-label { display: flex; gap: 9px; margin-top: 18px; }
.radius-label b { font-weight: 600; }

/* radius slider */
.slider { position: relative; height: 15px; margin: 21px -2px 0; }
.slider input {
  position: relative;
  display: block;
  width: 100%;
  height: 15px;
  appearance: none;
  background:
    linear-gradient(#91caff, #91caff) 8px 5px / 11% 5px no-repeat,
    linear-gradient(#f5f5f5, #f5f5f5) center / calc(100% - 16px) 5px no-repeat;
}
.slider input::-webkit-slider-thumb {
  appearance: none;
  width: 15px;
  height: 15px;
  border: 2px solid #91caff;
  border-radius: 50%;
  background: #fff;
}
.dot { position: absolute; z-index: 1; top: 3px; left: 3px; width: 9px; height: 9px; border: 2px solid #f0f0f0; border-radius: 50%; background: #fff; }
.dot.on { border-color: #91caff; }
.dot.end { left: auto; right: 3px; }
.marks { display: flex; justify-content: space-between; padding: 0 6px; line-height: 22px; }
.muted, .help { color: rgba(0, 0, 0, .45); }
.help { margin-top: 9px; }
.coords { font-family: Inter, "Noto Sans CJK KR", sans-serif; font-size: 15px; }
.hint { font-size: 15px; }
.map-label { margin: 31px 0 10px; }

/* map */
.map { position: relative; height: 400px; border-radius: 9px; overflow: hidden; }
.map-art { display: block; width: 100%; height: 100%; }
.lbl { font-size: 13px; font-weight: 500; text-anchor: middle; paint-order: stroke; stroke: #fff; stroke-width: 3px; stroke-opacity: .85; stroke-linejoin: round; }
.l-big { font-size: 16px; }
.l-small { font-size: 12px; }
.l-gray { fill: #5a5a5a; font-weight: 400; }
.l-green { fill: #3f7f3a; }
.l-orange { fill: #cd6a35; }
.l-amber { fill: #bd7d11; }
.l-blue { fill: #4765b5; }
.l-slate { fill: #666c87; }
.l-brown { fill: #766f6a; }
.l-line { font-size: 12px; fill: #2fae4b; }
.l-pill { font-size: 12px; fill: #dba514; }
.l-station { font-size: 14px; fill: #222; }
.exit { font-size: 11px; fill: #333; text-anchor: middle; font-weight: 500; }
.line-no { font-size: 14px; fill: #fff; }
.bubble { filter: drop-shadow(0 2px 3px rgba(0, 0, 0, .3)); }
.bubble-text { font-size: 14px; font-weight: 700; fill: #fff; text-anchor: middle; }
.naver { font: 900 13px Inter, sans-serif; fill: #03c75a; text-anchor: middle; }
.zoom {
  position: absolute;
  top: 11px;
  left: 11px;
  display: flex;
  flex-direction: column;
  width: 34px;
  border: 1px solid #444;
  background: #fff;
}
.zoom button { height: 25px; padding: 0; border: 0; background: none; }
.zoom button svg { display: block; width: 12px; height: 12px; margin: auto; }
.zoom-track { display: flex; justify-content: center; padding: 8px 0; border: solid #bbb; border-width: 1px 0; }
.zoom input {
  width: 22px;
  height: 174px;
  writing-mode: vertical-lr;
  direction: rtl;
  appearance: none;
  background: linear-gradient(#c8c8c8 33%, #2b83e6 33%) center / 4px 100% no-repeat;
}
.zoom input::-webkit-slider-thumb {
  appearance: none;
  width: 22px;
  height: 13px;
  border: 1px solid #444;
  background: linear-gradient(#e8384f, #e8384f) center / 14px 2px no-repeat #fff;
}

/* dialog buttons */
.modal-foot { display: flex; justify-content: flex-end; gap: 9px; margin-top: 28px; }
.modal-foot .btn { padding: 0 17px; }
```
